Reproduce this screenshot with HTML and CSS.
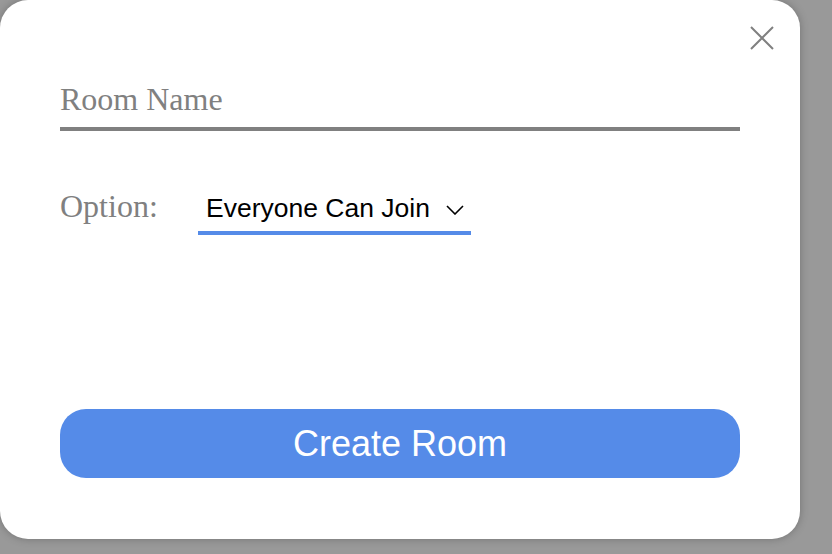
FILE: index.html
```html
<!DOCTYPE html>
<html>
<head>
<meta charset="utf-8">
<link rel="stylesheet" href="styles.css">
</head>
<body>
<div class="modal">
  <button class="close" aria-label="Close">
    <svg width="24" height="24" viewBox="0 0 24 24"><path d="M1 1 L23 23 M23 1 L1 23" stroke="#808080" stroke-width="2" fill="none"/></svg>
  </button>
  <input class="room-name" type="text" placeholder="Room Name">
  <div class="option-row">
    <span class="option-label">Option:</span>
    <div class="select">
      <span class="select-text">Everyone Can Join</span>
      <svg class="chev" width="18" height="10" viewBox="0 0 18 10"><path d="M1 1 L9 9 L17 1" stroke="#000" stroke-width="1.6" fill="none"/></svg>
    </div>
  </div>
  <button class="create">Create Room</button>
</div>
</body>
</html>
```
FILE: styles.css
```css
html, body {
  margin: 0;
  padding: 0;
  width: 832px;
  height: 554px;
  overflow: hidden;
  background: #999999;
}
.modal {
  position: relative;
  box-sizing: border-box;
  width: 800px;
  height: 539px;
  background: #fff;
  border-radius: 28px;
  box-shadow: 0 0 8px rgba(0,0,0,0.25);
  padding: 81px 60px 61px 60px;
  display: flex;
  flex-direction: column;
}
.close {
  position: absolute;
  left: 750px;
  top: 26px;
  width: 24px;
  height: 24px;
  padding: 0;
  border: none;
  background: none;
}
.close svg { display: block; }
.room-name {
  display: block;
  box-sizing: content-box;
  width: 680px;
  height: 37px;
  margin: 0;
  padding: 0 0 9px 0;
  border: none;
  border-bottom: 4px solid #808080;
  outline: none;
  font-family: "Liberation Serif", serif;
  font-size: 32px;
  line-height: 37px;
  color: #000;
  background: transparent;
}
.room-name::placeholder { color: #808080; opacity: 1; }
.option-row {
  display: flex;
  align-items: baseline;
  margin-top: 57px;
}
.option-label {
  width: 138px;
  font-family: "Liberation Serif", serif;
  font-size: 32px;
  line-height: 37px;
  color: #808080;
}
.select {
  display: flex;
  align-items: baseline;
  width: 273px;
  box-sizing: border-box;
  padding: 0 7px 8px 8px;
  border-bottom: 4px solid #558be8;
  font-family: "Liberation Sans", Arial, sans-serif;
  font-size: 26.5px;
  line-height: 30px;
  color: #000;
}
.chev {
  margin-left: 16px;
  align-self: center;
  position: relative;
  top: 2px;
}
.create {
  margin-top: auto;
  height: 69px;
  width: 680px;
  border: none;
  border-radius: 26px;
  background: #558be8;
  color: #fff;
  font-family: "Liberation Sans", Arial, sans-serif;
  font-size: 36px;
  padding: 0;
}
```
